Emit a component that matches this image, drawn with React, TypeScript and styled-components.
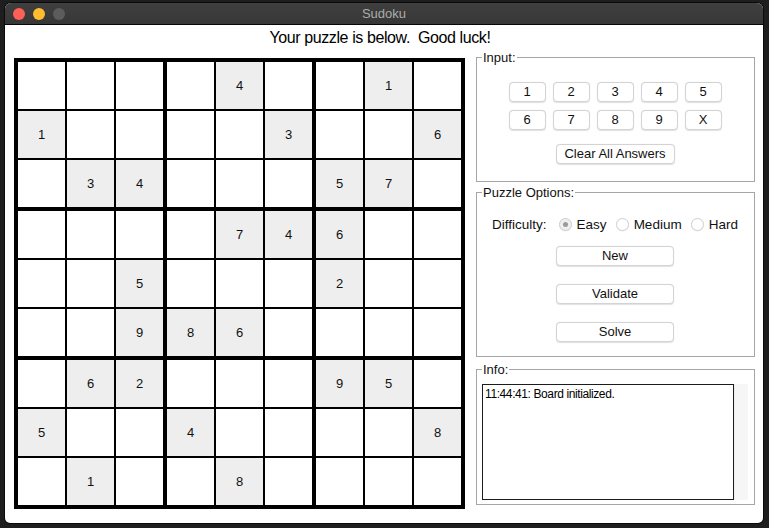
import React from 'react';
import styled, { createGlobalStyle } from 'styled-components';

const Global = createGlobalStyle`
  html, body { margin: 0; padding: 0; background: #1e1e1e; }
  body {
    font-family: "Liberation Sans", Arial, Helvetica, sans-serif;
    width: 769px; height: 528px; overflow: hidden;
  }
  * { box-sizing: border-box; }
`;

const Desktop = styled.div`
  width: 769px;
  height: 528px;
  padding: 3px 0 0 5px;
`;

const Window = styled.div`
  width: 758px;
  height: 520px;
  background: #fff;
  border-radius: 6px 6px 5px 5px;
  overflow: hidden;
  display: flex;
  flex-direction: column;
  box-shadow: 0 0 0 1px #0b0b0b;
`;

const TitleBar = styled.div`
  height: 22px;
  flex: none;
  background: linear-gradient(#3f3f3f, #373737);
  border-bottom: 1px solid #060606;
  display: grid;
  grid-template-columns: 1fr auto 1fr;
  align-items: center;
  padding: 0 8px;
`;

const Lights = styled.div`
  display: flex;
  gap: 8px;
`;

const Light = styled.span<{ $c: string }>`
  width: 12px;
  height: 12px;
  border-radius: 50%;
  background: ${(p) => p.$c};
`;

const TitleText = styled.div`
  color: #acacac;
  font-size: 13px;
  line-height: 16px;
`;

const Heading = styled.div`
  height: 25px;
  line-height: 25px;
  text-align: center;
  padding-right: 8px;
  font-size: 16px;
  letter-spacing: -0.4px;
  color: #000;
`;

const Main = styled.div`
  display: flex;
  align-items: flex-start;
  padding-left: 9px;
  gap: 11px;
`;

const Board = styled.div`
  margin-top: 8px;
  background: #000;
  padding: 4px;
  display: grid;
  grid-template-columns: repeat(3, 145px);
  grid-template-rows: repeat(3, 145px);
  gap: 4px;
`;

const Box = styled.div`
  display: grid;
  grid-template-columns: repeat(3, 47px);
  grid-template-rows: repeat(3, 47px);
  gap: 2px;
`;

const Cell = styled.div<{ $given: boolean }>`
  background: ${(p) => (p.$given ? '#eeeeee' : '#ffffff')};
  display: flex;
  align-items: center;
  justify-content: center;
  font-size: 13px;
  color: #111;
`;

const Side = styled.div`
  width: 279px;
  display: flex;
  flex-direction: column;
  gap: 3px;
`;

const Frame = styled.fieldset<{ $pt: number; $pb: number; $gapTop?: number }>`
  margin: 0;
  margin-top: ${(p) => p.$gapTop ?? 0}px;
  min-width: 0;
  border: 1px solid #a6a6a6;
  padding: ${(p) => p.$pt}px 6px ${(p) => p.$pb}px 5px;
`;

const Legend = styled.legend`
  font-size: 13px;
  line-height: 15px;
  padding: 0 1px;
  color: #111;
`;

const KeyGrid = styled.div`
  display: grid;
  grid-template-columns: repeat(5, 37px);
  grid-auto-rows: 20px;
  column-gap: 7px;
  row-gap: 8px;
  justify-content: center;
`;

const Button = styled.button<{ $w: number }>`
  width: ${(p) => p.$w}px;
  height: 20px;
  padding: 0;
  background: #fff;
  border: 1px solid #d3d3d3;
  border-radius: 4px;
  box-shadow: 0 0.5px 1px rgba(0, 0, 0, 0.12);
  font-family: "Liberation Sans", Arial, Helvetica, sans-serif;
  font-size: 13px;
  line-height: 18px;
  color: #111;
`;

const CenterRow = styled.div<{ $mt: number }>`
  display: flex;
  justify-content: center;
  margin-top: ${(p) => p.$mt}px;
`;

const RadioRow = styled.div`
  height: 20px;
  display: flex;
  align-items: center;
  justify-content: center;
  gap: 9px;
  font-size: 13.5px;
  color: #111;
`;

const RadioLabel = styled.span`
  margin-right: 3px;
`;

const Radio = styled.span`
  display: inline-flex;
  align-items: center;
  gap: 5px;
`;

const Circle = styled.span<{ $on: boolean }>`
  width: 13px;
  height: 13px;
  border-radius: 50%;
  border: 1px solid #cfcfcf;
  background: ${(p) => (p.$on ? '#efefef' : '#fff')};
  box-shadow: 0 0.5px 1px rgba(0, 0, 0, 0.08);
  display: flex;
  align-items: center;
  justify-content: center;
  &::after {
    content: '';
    display: ${(p) => (p.$on ? 'block' : 'none')};
    width: 5px;
    height: 5px;
    border-radius: 50%;
    background: #9a9a9a;
  }
`;

const InfoBody = styled.div`
  display: flex;
  height: 116px;
`;

const TextBox = styled.div`
  flex: 1;
  border: 1px solid #1c1c1c;
  padding: 2px 2px;
  font-size: 12px;
  line-height: 14px;
  letter-spacing: -0.4px;
  color: #000;
`;

const Scroll = styled.div`
  width: 14px;
  background: #f6f6f6;
  border-left: 1px solid #eeeeee;
`;

const puzzle = [
  '....4..1.',
  '1....3..6',
  '.34...57.',
  '....746..',
  '..5...2..',
  '..986....',
  '.62...95.',
  '5..4....8',
  '.1..8....',
];

export default function App() {
  const boxes = [];
  for (let b = 0; b < 9; b++) {
    const br = Math.floor(b / 3) * 3;
    const bc = (b % 3) * 3;
    const cells = [];
    for (let i = 0; i < 9; i++) {
      const r = br + Math.floor(i / 3);
      const c = bc + (i % 3);
      const ch = puzzle[r][c];
      const given = ch !== '.';
      cells.push(
        <Cell key={i} $given={given}>
          {given ? ch : ''}
        </Cell>
      );
    }
    boxes.push(<Box key={b}>{cells}</Box>);
  }

  const keys = ['1', '2', '3', '4', '5', '6', '7', '8', '9', 'X'];

  return (
    <>
      <Global />
      <Desktop>
        <Window>
          <TitleBar>
            <Lights>
              <Light $c="#fe5f57" />
              <Light $c="#febc2e" />
              <Light $c="#5c5c5c" />
            </Lights>
            <TitleText>Sudoku</TitleText>
            <span />
          </TitleBar>
          <Heading>Your puzzle is below.&nbsp; Good luck!</Heading>
          <Main>
            <Board>{boxes}</Board>
            <Side>
              <Frame $pt={17} $pb={17}>
                <Legend>Input:</Legend>
                <KeyGrid>
                  {keys.map((k) => (
                    <Button key={k} $w={37}>
                      {k}
                    </Button>
                  ))}
                </KeyGrid>
                <CenterRow $mt={14}>
                  <Button $w={119}>Clear All Answers</Button>
                </CenterRow>
              </Frame>
              <Frame $pt={14} $pb={14}>
                <Legend>Puzzle Options:</Legend>
                <RadioRow>
                  <RadioLabel>Difficulty:</RadioLabel>
                  <Radio>
                    <Circle $on={true} />
                    Easy
                  </Radio>
                  <Radio>
                    <Circle $on={false} />
                    Medium
                  </Radio>
                  <Radio>
                    <Circle $on={false} />
                    Hard
                  </Radio>
                </RadioRow>
                <CenterRow $mt={12}>
                  <Button $w={118}>New</Button>
                </CenterRow>
                <CenterRow $mt={18}>
                  <Button $w={118}>Validate</Button>
                </CenterRow>
                <CenterRow $mt={18}>
                  <Button $w={118}>Solve</Button>
                </CenterRow>
              </Frame>
              <Frame $pt={7} $pb={4} $gapTop={2}>
                <Legend>Info:</Legend>
                <InfoBody>
                  <TextBox>11:44:41: Board initialized.</TextBox>
                  <Scroll />
                </InfoBody>
              </Frame>
            </Side>
          </Main>
        </Window>
      </Desktop>
    </>
  );
}
